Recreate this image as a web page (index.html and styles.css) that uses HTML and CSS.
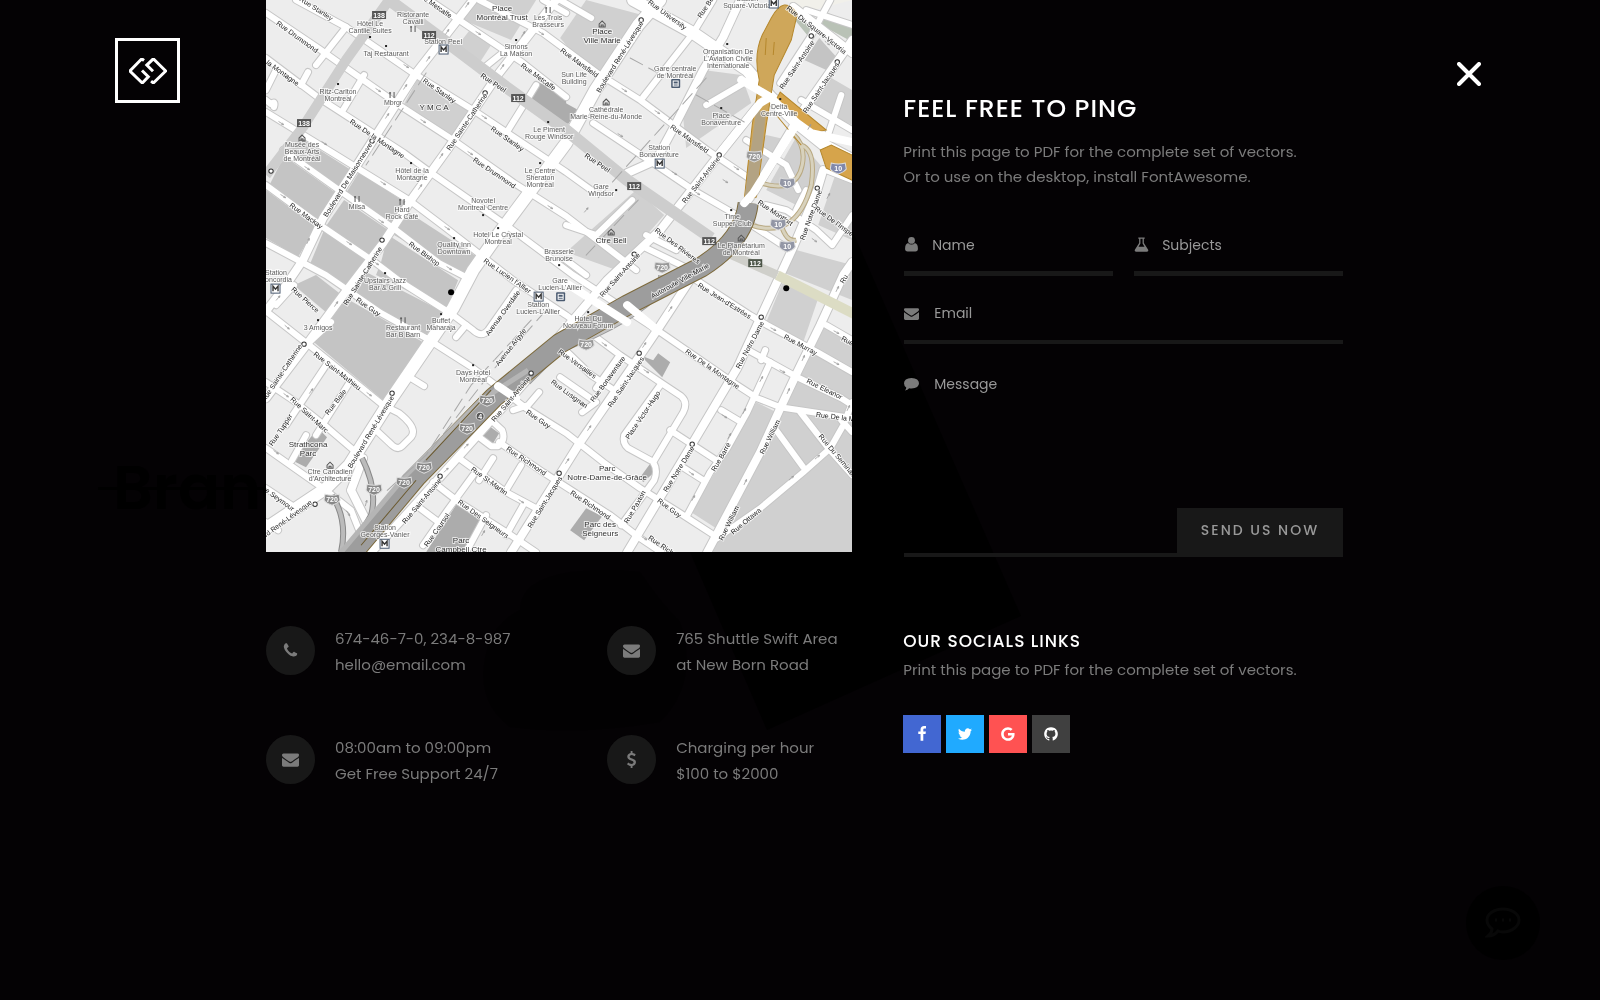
FILE: index.html
```html
<!DOCTYPE html>
<html lang="en">
<head>
    <meta charset="UTF-8">
    <meta name="viewport" content="width=device-width, initial-scale=1.0">
    <title>Contact</title>
    <link rel="stylesheet" href="styles.css">
</head>
<body>
    <!-- Page behind the overlay -->
    <div class="backdrop" aria-hidden="true">
        <span class="ghost-title">Brand</span>
        <svg class="ghost-art" viewBox="0 0 1600 1000">
            <path d="M852 230L1021 616 767 730 690 552H852z"/>
            <path d="M490 640q10-20 30-30 0-30 50-38 40-4 70 0 20 30 40 50 20 60-20 100-80 14-150 5-40-30-20-87z" opacity=".5"/>
        </svg>
    </div>

    <!-- Icons -->
    <svg class="sprite" aria-hidden="true">
        <symbol id="envelope" viewBox="0 0 1792 1792"><path d="M1792 710v794q0 66-47 113t-113 47h-1472q-66 0-113-47t-47-113v-794q44 49 101 87 362 246 497 345 57 42 92.5 65.5t94.5 48 110 24.5h2q51 0 110-24.5t94.5-48 92.5-65.5q170-123 498-345 57-39 100-87zm0-294q0 79-49 151t-122 123q-376 261-468 325-10 7-42.5 31t-54 38.5-52 32.5-57.5 27-50 9h-2q-23 0-50-9t-57.5-27-52-32.5-54-38.5-42.5-31q-91-64-262-182.5t-205-142.5q-62-42-117-115.5t-55-136.5q0-78 41.5-130t118.5-52h1472q65 0 112.5 47t47.5 113z"/></symbol>
        <symbol id="phone" viewBox="0 0 1792 1792"><path d="M1600 1240q0 27-10 70.5t-21 68.5q-21 50-122 106-94 51-186 51-27 0-53-3.5t-57.5-12.5-47-14.5-55.5-20.5-49-18q-98-35-175-83-127-79-264-216t-216-264q-48-77-83-175-3-9-18-49t-20.5-55.5-14.5-47-12.5-57.5-3.5-53q0-92 51-186 56-101 106-122 25-11 68.5-21t70.5-10q14 0 21 3 18 6 53 76 11 19 30 54t35 63.5 31 53.5q3 4 17.5 25t21.5 35.5 7 28.5q0 20-28.5 50t-62 55-62 53-28.5 46q0 9 5 22.5t8.5 20.5 14 24 11.5 19q76 137 174 235t235 174q2 1 19 11.5t24 14 20.5 8.5 22.5 5q18 0 46-28.5t53-62 55-62 50-28.5q14 0 28.5 7t35.5 21.5 25 17.5q25 15 53.5 31t63.5 35 54 30q70 35 76 53 3 7 3 21z"/></symbol>
        <symbol id="dollar" viewBox="0 0 1792 1792"><path d="M1362 1185q0 153-99.5 263.5t-258.5 136.5v175q0 14-9 23t-23 9h-135q-13 0-22.5-9.5t-9.5-22.5v-175q-66-9-127.5-31t-101.5-44.5-74-48-46.5-37.5-17.5-18q-17-21-2-41l103-135q7-10 23-12 15-2 24 9l2 2q113 99 243 125 37 8 74 8 81 0 142.5-43t61.5-122q0-28-15-53t-33.5-42-58.5-37.5-66-32-80-32.5q-39-16-61.5-25t-61.5-26.5-62.5-31-56.5-35.5-53.5-42.5-43.5-49-35.5-58-21-66.5-8.5-78q0-138 98-242t255-134v-180q0-13 9.5-22.5t22.5-9.5h135q14 0 23 9t9 23v176q57 6 110.5 23t87 33.5 63.5 37.5 39 29 15 14q17 18 5 38l-81 146q-8 15-23 16-14 3-27-7-3-3-14.5-12t-39-26.5-58.5-32-74.5-26-85.5-11.5q-95 0-155 43t-60 111q0 26 8.5 48t29.5 41.5 39.5 33 56 31 60.5 27 70 27.5q53 20 81 31.5t76 35 75.5 42.5 62 50 53 63.5 31.5 76.5 13 94z"/></symbol>
        <symbol id="user" viewBox="0 0 14 14"><circle cx="7" cy="3.2" r="3.2"/><path d="M3.8 5.6Q1 6.4 1 11q0 2.6 2.4 2.6h7.2Q13 13.600 13 11q0-4.600-2.800-5.400Q9 7 7 7T3.800 5.600z"/></symbol>
        <symbol id="flask" viewBox="0 0 14 14"><path fill-rule="evenodd" d="M4 .4h6v1.200H9.200v4l4 6.400q.8 1.600-1 1.700H1.800q-1.800-.1-1-1.700l4-6.400v-4H4zM6 1.600v4.400L4.200 9h5.600L8 6V1.600z"/></symbol>
        <symbol id="comment" viewBox="0 0 16 14"><path d="M8 0q8 .6 8 5.600T8 11.300q-1.500 0-2.500-.2Q4 13 1 13.400 2.500 12 2.400 10.200 0 8.500 0 5.600 0 .6 8 0z"/></symbol>
        <symbol id="facebook" viewBox="0 0 1792 1792"><path d="M1343 12v264h-157q-86 0-116 36t-30 108v189h293l-39 296h-254v759h-306v-759h-255v-296h255v-218q0-186 104-288.5t277-102.5q147 0 228 12z"/></symbol>
        <symbol id="twitter" viewBox="0 0 1792 1792"><path d="M1684 408q-67 98-162 167 1 14 1 42 0 130-38 259.5t-115.5 248.5-184.5 210.5-258 146-323 54.5q-271 0-496-145 35 4 78 4 225 0 401-138-105-2-188-64.5t-114-159.5q33 5 61 5 43 0 85-11-112-23-185.5-111.5t-73.5-205.5v-4q68 38 146 41-66-44-105-115t-39-154q0-88 44-163 121 149 294.5 238.5t371.5 99.5q-8-38-8-74 0-134 94.5-228.5t228.5-94.5q140 0 236 102 109-21 205-78-37 115-142 178 93-10 186-50z"/></symbol>
        <symbol id="google" viewBox="0 0 1792 1792"><path d="M896 786h725q12 67 12 128 0 217-91 387.5t-259.5 266.5-386.5 96q-157 0-299-60.5t-245-163.5-163.5-245-60.5-299 60.5-299 163.5-245 245-163.5 299-60.5q300 0 515 201l-209 201q-123-119-306-119-129 0-238.500 65t-173.500 176.500-64 243.500 64 243.500 173.500 176.500 238.500 65q87 0 160-24t120-60 82-82 51.500-87 22.500-78h-436v-264z"/></symbol>
        <symbol id="github" viewBox="0 0 1792 1792"><path d="M896 128q209 0 385.5 103t279.5 279.5 103 385.500q0 251-146.500 451.500t-378.500 277.500q-27 5-40-7t-13-30q0-3 .5-76.500t.5-134.500q0-97-52-142 57-6 102.500-18t94-39 81-66.500 53-105 20.500-150.500q0-119-79-206 37-91-8-204-28-9-81 11t-92 44l-38 24q-93-26-192-26t-192 26q-16-11-42.500-27t-83.500-38.500-85-13.500q-45 113-8 204-79 87-79 206 0 85 20.500 150t52.500 105 80.500 67 94 39 102.500 18q-39 36-49 103-21 10-45 15t-57 5-65.500-21.500-55.500-62.500q-19-32-48.500-52t-49.500-24l-20-3q-21 0-29 4.500t-5 11.500 9 14 13 12l7 5q22 10 43.500 38t31.500 51l10 23q13 38 44 61.500t67 30 69.500 7 55.500-3.500l23-4q0 38 .5 88.500t.5 54.500q0 18-13 30t-40 7q-232-77-378.500-277.500t-146.500-451.500q0-209 103-385.500t279.500-279.500 385.500-103z"/></symbol>
    </svg>

    <div class="page">
        <header class="brand">
            <a class="logo" href="#" aria-label="Home">
                <svg viewBox="0 0 38 26"><path d="M15 2.500L12.800.8.900 13l12.400 12 6-6.300-6.300-6.200M24 13.300l-6.200-6.200L24.300.8 36.700 13 24.300 25l-2.200-1.800"/></svg>
            </a>
        </header>

        <main class="content">
            <section class="left">
                <svg class="map" id="map" viewBox="0 0 586 552" role="img" aria-label="Map">
                    <rect width="586" height="552" fill="#ededed"/>
                    <!-- Blocks -->
                    <g class="blocks">
                        <path d="M210 0H270L245 40 197 20z"/>
                        <path d="M203 31L225 45 212 65 188 50z"/>
                        <path d="M152 78L205 110 186 136 138 104z"/>
                        <path d="M294 38L320 0 376 15 332 82z"/>
                        <path d="M30 135L85 170 73 190 20 155z" class="mid"/>
                        <path d="M93 172L140 203 125 223 80 193z" class="mid"/>
                        <path d="M18 156L70 193 53 220 3 186z" class="mid"/>
                        <path d="M78 200L122 230 100 262 60 226z" class="mid"/>
                        <path d="M0 190L50 227 32 257 0 238z" class="mid"/>
                        <path d="M58 230L105 263 85 293 44 264z" class="mid"/>
                        <path d="M128 235L142 212 213 258 200 277z" class="mid"/>
                        <path d="M115 262L122 235 192 280 180 310 110 275z" class="mid"/>
                        <path d="M28 285L50 275 76 295 60 312z" class="mid"/>
                        <path d="M100 272L178 312 160 335 85 292z" class="mid"/>
                        <path d="M80 298L157 342 117 400 48 342z" class="mid"/>
                        <path d="M272 82L300 96V127L262 100z" class="dark"/>
                        <path d="M294 100L312 110 302 124 294 120z" class="dark"/>
                        <path d="M437 70L475 75 485 103 420 148 417 118z"/>
                        <path d="M370 190L398 215 350 270 300 252z"/>
                        <path d="M500 135L522 140 484 195 488 145z"/>
                        <path d="M530 137L560 172 540 210 500 190z"/>
                        <path d="M553 38L571 58 560 70 538 60z" class="mid"/>
                        <path d="M560 75L586 90V125L545 105z"/>
                        <path d="M570 172L586 180V240L552 225z"/>
                        <path d="M530 250L586 265V300L516 272z"/>
                        <path d="M516 283L553 295 536 345 500 322z"/>
                        <path d="M557 322L586 340V418L516 406z"/>
                        <path d="M490 402L510 412 453 530 425 512z"/>
                        <path d="M514 410L586 420V552H441L453 530z"/>
                        <path d="M374 355L387 360 392 353 404 362 396 377z" class="dark"/>
                        <path d="M52 428L61 437 40 467 26 460z" class="dark"/>
                        <path d="M191 503L217 520 196 552H160z" class="dark"/>
                        <path d="M222 425L233 433 227 443 217 437z" class="dark"/>
                        <path d="M320 508L336 516 318 540 304 530z" class="dark"/>
                        <path d="M385 462L387 473 377 482 374 477z" class="dark"/>
                    </g>
                    <path d="M527 18L546 20 545 40zM560 12L586 25V42L555 25z" fill="#b9c2b6"/>
                    <path d="M520 0H586L540 12z" fill="#f1f0ea"/>

                    <!-- Streets: casing first, white fill on top -->
                    <defs>
                        <g id="thin">
                            <path d="M0 13L52 48 83 70 133 105 187 140 248 183 300 216 370 270"/>
                            <path d="M0 58L53 98 138 153 168 175 240 225 307 275 391 330 471 385 491 398 514 407 586 418"/>
                            <path d="M0 112L67 153 143 200 180 228 247 280 300 315 354 355 394 382 415 396Q422 402 417 412L387 462Q392 470 388 480L355 525"/>
                            <path d="M17 150L73 190 130 230 173 263 200 277"/>
                            <path d="M0 185L57 227 110 263 135 282 187 315 207 330Q216 338 222 330L250 290"/>
                            <path d="M0 243L60 275 115 313 160 338 207 368 260 408 300 433 337 462 374 488 414 513 451 537"/>
                            <path d="M0 311L52 352 117 405 133 413Q152 428 145 437L136 446Q132 450 126 445L110 430"/>
                            <path d="M0 382L27 400 62 428 97 458"/>
                            <path d="M0 448L20 462 57 488 85 510 95 535"/>
                            <path d="M0 488L30 508M0 522L12 530"/>
                            <path d="M30 0L80 27 147 73 207 110 300 172 325 190"/>
                            <path d="M163 0L193 20 257 63 300 97M327 123L387 163 427 190 467 213 524 250"/>
                            <path d="M213 0L277 33 331 73 374 100 441 150 481 177"/>
                            <path d="M277 0L300 13M0 100L5 104Q10 100 8 107"/>
                            <path d="M447 0L427 33 377 97M540 10L586 25M564 0L544 37 514 83"/>
                            <path d="M80 27L50 65M98 75L77 110M42 72L35 85M240 50L215 70M270 85L242 130"/>
                            <path d="M10 70L0 90M325 18L294 0M440 105L500 70"/>
                            <path d="M504 362L481 412 461 448 444 472 421 515"/>
                            <path d="M451 538L494 508 537 472 564 448 577 425 586 402"/>
                            <path d="M510 430L537 467M534 412L562 448 586 475M575 420L586 432"/>
                            <path d="M394 385L358 435Q356 443 362 448L384 460M404 430L427 445 450 460M415 466L437 480"/>
                            <path d="M233 442L277 472 344 515 374 538 395 552"/>
                            <path d="M193 458L240 492 270 508M167 482L193 502 242 533 270 552M150 505L170 520"/>
                            <path d="M207 475L180 512 157 545M227 458L213 480M255 465L240 490M220 515L200 552M257 505L240 535"/>
                            <path d="M223 418L236 430Q240 440 232 446H225L213 437M273 392L262 405 247 410M145 378L158 386M200 325L190 337"/>
                            <path d="M427 278L484 315 501 325 551 352 586 372M482 350L531 377 575 398 586 405M560 325L586 340M495 360L499 350"/>
                            <path d="M455 410L475 422M294 345L325 375 345 388M294 377L330 402 316 412M352 357L330 388"/>
                            <path d="M60 365L20 425M85 380L50 435M40 435L26 460M28 285L10 305M65 322L35 350"/>
                            <path d="M300 225L330 235 366 200M320 275L300 260M380 248L425 270M410 250L380 235M500 205L520 210 550 230 566 245 586 215"/>
                            <path d="M535 100L586 130M540 190L530 210M575 95L560 140M560 170L586 180M480 140L520 165 532 190"/>
                        </g>
                        <g id="wide">
                            <path d="M207 0L150 73 107 140 57 218 37 260 20 285 0 311"/>
                            <path d="M290 0L233 73 183 147 147 197 117 243 77 295 38 348 0 398"/>
                            <path d="M474 0L457 37 437 70 410 123 390 160 361 173"/>
                            <path d="M494 103L454 153 394 230 341 280 294 335 265 375 200 448 137 518 105 552"/>
                            <path d="M586 40L537 110 487 193 478 205M427 275L391 330 374 355 314 442 245 552"/>
                            <path d="M557 170L551 190 527 247 514 275 494 318 471 368 427 442 361 552"/>
                            <path d="M586 262L577 275 554 325 531 372 514 408 494 452 441 552"/>
                            <path d="M527 7L586 53M97 458L85 490M85 490L105 530"/>
                        </g>
                        <g id="avenue">
                            <path d="M394 0L372 25 329 90 300 143 233 233 207 270 187 308 123 402 83 465 60 488 0 528"/>
                            <path d="M367 0L427 33 481 70 504 97 531 123 561 147 586 160"/>
                        </g>
                    </defs>
                    <use href="#thin" class="street casing-thin"/>
                    <use href="#wide" class="street casing-wide"/>
                    <use href="#avenue" class="street casing-avenue"/>
                    <use href="#thin" class="street fill-thin"/>
                    <use href="#wide" class="street fill-wide"/>
                    <use href="#avenue" class="street fill-avenue"/>

                    <!-- Main routes -->
                    <g class="route">
                        <path d="M123 0L80 60 37 127 0 175" stroke="#cdcdcd" stroke-width="10"/>
                        <path d="M123 0L187 47 240 87 300 130 361 180 445 238" stroke="#cdcdcd" stroke-width="12"/>
                        <path d="M455 250L511 275" stroke="#cfcfca" stroke-width="9"/>
                        <path d="M511 275L590 315" stroke="#dcdcc4" stroke-width="10"/>
                        <path d="M492 182Q530 195 536 165 540 145 526 133M485 225Q530 240 545 185 550 150 535 145M515 225Q520 242 530 240" stroke="#b9a982" stroke-width="5"/>
                        <path d="M492 182Q530 195 536 165 540 145 526 133M485 225Q530 240 545 185 550 150 535 145M515 225Q520 242 530 240" stroke="#d8d2bd" stroke-width="3"/>
                        <path d="M96 458Q112 490 105 515 95 535 75 552M66 495Q82 520 75 552" stroke="#888" stroke-width="6"/>
                        <path d="M96 458Q112 490 105 515 95 535 75 552M66 495Q82 520 75 552" stroke="#bbb" stroke-width="4"/>
                        <path d="M395 275V290Q370 320 294 350L262 382" stroke="#999" stroke-width="6"/>
                        <path d="M395 275V290Q370 320 294 350L262 382" stroke="#c4c4c4" stroke-width="4"/>
                        <path d="M482 203Q478 240 435 267L361 305 294 343 228 397 150 477 83 557" stroke="#7d6a3c" stroke-width="21"/>
                        <path d="M482 203Q478 240 435 267L361 305 294 343 228 397 150 477 83 557" stroke="#9d9d9d" stroke-width="19"/>
                        <path d="M262 370L215 400 140 475 75 552" stroke="#b5b5b5" stroke-width="5"/>
                        <path d="M225 390L160 460M150 480L95 545" stroke="#6b5a30" stroke-width="1"/>
                    </g>
                    <path d="M505 18Q518-6 531 14L525 40 508 75 500 125 490 197 478 200 486 125 493 80Q487 55 496 35z" fill="#cfa75a" stroke="#b5872b"/>
                    <path d="M490 110L500 112 490 197 478 200z" fill="#b3a383"/>
                    <path d="M514 92L560 130 550 132 507 105zM554 150L565 145 590 157V182L560 168z" fill="#d6a44b" stroke="#b5872b"/>
                    <path d="M499 55L500 38M507 55L508 42M510 115L535 145" stroke="#b5872b" fill="none"/>
                    <g class="street fill-wide">
                        <path d="M475 80L504 97 531 123 545 133 586 142M504 97L494 103 454 153M531 123L487 193 478 203"/>
                        <path d="M361 305L391 330M300 283L361 322M232 386L250 398"/>
                    </g>
                    <path class="rail" d="M160 73L100 165M440 78L330 200M364 58L390 72M430 95L478 122M372 200L320 255M280 310L225 372 165 450M265 320L205 385 160 455 118 493"/>
                </svg>

                <ul class="contacts">
                    <li class="contact">
                        <span class="badge"><svg><use href="#phone"/></svg></span>
                        <p>674-46-7-0, 234-8-987<br>hello@email.com</p>
                    </li>
                    <li class="contact">
                        <span class="badge"><svg><use href="#envelope"/></svg></span>
                        <p>765 Shuttle Swift Area<br>at New Born Road</p>
                    </li>
                    <li class="contact">
                        <span class="badge"><svg><use href="#envelope"/></svg></span>
                        <p>08:00am to 09:00pm<br>Get Free Support 24/7</p>
                    </li>
                    <li class="contact">
                        <span class="badge"><svg><use href="#dollar"/></svg></span>
                        <p>Charging per hour<br>$100 to $2000</p>
                    </li>
                </ul>
            </section>

            <section class="right">
                <h1>Feel free to ping</h1>
                <p class="intro">Print this page to PDF for the complete set of vectors.<br>Or to use on the desktop, install FontAwesome.</p>

                <form class="form">
                    <div class="field half">
                        <label for="name" aria-label="Name"><svg><use href="#user"/></svg></label>
                        <input id="name" type="text" placeholder="Name">
                    </div>
                    <div class="field half">
                        <label for="subjects" aria-label="Subjects"><svg><use href="#flask"/></svg></label>
                        <input id="subjects" type="text" placeholder="Subjects">
                    </div>
                    <div class="field">
                        <label for="email" aria-label="Email"><svg><use href="#envelope"/></svg></label>
                        <input id="email" type="email" placeholder="Email">
                    </div>
                    <div class="field message">
                        <label for="message" aria-label="Message"><svg><use href="#comment"/></svg></label>
                        <textarea id="message" placeholder="Message"></textarea>
                        <button class="send" type="submit">Send us now</button>
                    </div>
                </form>

                <h2>Our socials links</h2>
                <p class="note">Print this page to PDF for the complete set of vectors.</p>
                <nav class="socials">
                    <a class="facebook" href="#" aria-label="Facebook"><svg><use href="#facebook"/></svg></a>
                    <a class="twitter" href="#" aria-label="Twitter"><svg><use href="#twitter"/></svg></a>
                    <a class="google" href="#" aria-label="Google"><svg><use href="#google"/></svg></a>
                    <a class="github" href="#" aria-label="GitHub"><svg><use href="#github"/></svg></a>
                </nav>
            </section>
        </main>

        <div class="close-wrap">
            <button class="close" type="button" aria-label="Close">
                <svg viewBox="0 0 24 24"><path d="M2 2l20 20M22 2L2 22"/></svg>
            </button>
        </div>
    </div>

    <button class="chat" type="button" aria-label="Chat">
        <svg viewBox="0 0 36 34"><path d="M18 3c9 0 16 5 16 11s-7 12-16 12q-3 0-5-1-4 5-10 5 4-3 4-7-5-4-5-9C2 8 9 3 18 3z"/><path d="M10 14h2M17 14h2M24 14h2"/></svg>
    </button>

    <script src="map.js"></script>
</body>
</html>
```
FILE: styles.css
```css
* {
    box-sizing: border-box;
}

body {
    margin: 0;
    min-height: 100vh;
    background-color: #040204;
    color: #7b7b7b;
    font-family: Poppins, Inter, sans-serif;
    font-size: 15px;
    line-height: 26px;
}

h1, h2, p, ul {
    margin: 0;
    padding: 0;
}

h1, h2 {
    color: #ffffff;
    font-weight: 500;
    text-transform: uppercase;
    letter-spacing: 1px;
}

svg {
    display: block;
    fill: currentColor;
}

button {
    border: none;
    cursor: pointer;
    font-family: inherit;
}

.sprite {
    position: absolute;
    width: 0;
    height: 0;
}

/* Background page */
.backdrop {
    position: fixed;
    inset: 0;
    z-index: -1;
    color: #000000;
}

.ghost-title {
    position: absolute;
    top: 451px;
    left: 98px;
    padding-left: 15px;
    font-size: 62px;
    font-weight: 600;
    line-height: 74px;
}

.ghost-title::before {
    content: "";
    position: absolute;
    top: 36px;
    left: 0;
    width: 100%;
    height: 3px;
    background-color: #000000;
}

.ghost-art {
    width: 100%;
}

.page {
    display: grid;
    grid-template-columns: 266px 1fr 257px;
    align-items: start;
}

.brand {
    padding: 38px 0 0 115px;
}

.logo {
    display: flex;
    align-items: center;
    justify-content: center;
    width: 65px;
    height: 65px;
    border: 3px solid #ffffff;
    color: #ffffff;
}

.logo svg {
    width: 38px;
    height: 26px;
    fill: none;
    stroke: currentColor;
    stroke-width: 3;
}

.close-wrap {
    display: flex;
    justify-content: flex-end;
    padding: 62px 119px 0 0;
}

.close {
    padding: 0;
    background: none;
    color: #ffffff;
}

.close svg {
    width: 24px;
    height: 24px;
    stroke: currentColor;
    stroke-width: 4;
    stroke-linecap: round;
}

.content {
    display: grid;
    grid-template-columns: minmax(0, 4fr) minmax(0, 3fr);
    gap: 51px;
}

/* Map */
.map {
    width: 100%;
    height: auto;
    font-family: "Liberation Sans", Arial, sans-serif;
    font-size: 7px;
}

.blocks {
    fill: #d0d0d0;
}

.blocks .mid {
    fill: #c4c4c4;
}

.blocks .dark {
    fill: #acacac;
}

.street, .route, .rail {
    fill: none;
    stroke: #ffffff;
    stroke-linecap: round;
    stroke-linejoin: round;
}

.casing-thin, .casing-wide, .casing-avenue {
    stroke: #c6c6c6;
}

.casing-thin { stroke-width: 8; }
.casing-wide { stroke-width: 10; }
.casing-avenue { stroke-width: 14; }
.fill-thin { stroke-width: 6; }
.fill-wide { stroke-width: 8; }
.fill-avenue { stroke-width: 12; }

.route {
    stroke-linecap: butt;
}

.rail {
    stroke: #a8a8a8;
    stroke-width: 1;
    stroke-dasharray: 14 7;
}

.road-name, .place, .park {
    text-anchor: middle;
    fill: #1c1c1c;
    stroke: #ffffff;
    stroke-width: 2;
    stroke-opacity: 0.7;
    paint-order: stroke;
}

.place {
    fill: #5c5c5c;
}

.park {
    font-size: 8px;
    fill: #333333;
}

.shield-text {
    text-anchor: middle;
    fill: #ffffff;
    font-weight: bold;
    font-size: 7px;
}

/* Contact details */
.contacts {
    display: grid;
    grid-template-columns: 341fr 245fr;
    row-gap: 57px;
    margin-top: 74px;
    list-style: none;
}

.contact {
    display: flex;
    gap: 20px;
    white-space: nowrap;
}

.badge {
    display: flex;
    align-items: center;
    justify-content: center;
    flex: none;
    width: 49px;
    height: 49px;
    border-radius: 50%;
    background-color: #181818;
}

.badge svg {
    width: 17px;
    height: 17px;
}

/* Form */
.right {
    padding-top: 93px;
}

h1 {
    font-size: 25px;
    line-height: 32px;
}

.intro {
    margin-top: 14px;
    line-height: 25px;
}

.form {
    display: grid;
    grid-template-columns: repeat(2, minmax(0, 1fr));
    column-gap: 21px;
    margin: 19px 0 0 1px;
}

.field {
    display: flex;
    align-items: center;
    grid-column: span 2;
    gap: 15px;
    height: 68px;
    padding-top: 10px;
    border-bottom: 4px solid #181818;
}

.half {
    grid-column: span 1;
    gap: 13px;
    border-bottom-width: 5px;
}

.field label svg {
    width: 15px;
    height: 15px;
}

.field input, .field textarea {
    flex: 1;
    min-width: 0;
    padding: 0;
    border: none;
    outline: none;
    resize: none;
    background: none;
    color: #999999;
    font: inherit;
    font-size: 14px;
}

.field ::placeholder {
    color: #999999;
    opacity: 1;
}

.message {
    align-items: flex-start;
    height: 213px;
    padding-top: 27px;
}

.message label {
    padding-top: 6px;
}

.message textarea {
    align-self: stretch;
}

.send {
    align-self: flex-end;
    width: 166px;
    height: 45px;
    background-color: #181818;
    color: #999999;
    font-size: 14px;
    font-weight: 500;
    text-transform: uppercase;
    letter-spacing: 2px;
}

h2 {
    margin-top: 71px;
    font-size: 17px;
    line-height: 26px;
}

.note {
    margin-top: 3px;
}

.socials {
    display: flex;
    gap: 5px;
    margin-top: 32px;
}

.socials a {
    display: flex;
    align-items: center;
    justify-content: center;
    width: 38px;
    height: 38px;
    color: #ffffff;
}

.socials svg {
    width: 16px;
    height: 16px;
}

.facebook { background-color: #4267d2; }
.twitter { background-color: #20aaff; }
.google { background-color: #ff5252; }
.github { background-color: #404040; }

.chat {
    position: fixed;
    right: 60px;
    bottom: 40px;
    display: flex;
    align-items: center;
    justify-content: center;
    width: 74px;
    height: 74px;
    border-radius: 50%;
    background-color: #000000;
    color: #080808;
}

.chat svg {
    width: 36px;
    height: 34px;
    fill: none;
    stroke: currentColor;
    stroke-width: 3;
}
```
FILE: map.js
```js
// Labels of the map: text, x, y, angle
const roads = [
    ["Rue Stanley", 50, 9, 33], ["Rue Drummond", 31, 37, 36], ["De la Montagne", 12, 70, 36],
    ["Rue Metcalfe", 168, 5, 35], ["Rue Metcalfe", 272, 77, 36], ["Rue Stanley", 173, 91, 35],
    ["Rue Stanley", 241, 139, 35], ["Rue Peel", 227, 83, 34], ["Rue Peel", 331, 163, 34],
    ["Rue De la Montagne", 111, 139, 34], ["Rue Drummond", 228, 173, 34], ["Rue Mackay", 40, 216, 36],
    ["Rue Bishop", 158, 254, 36], ["Rue Sainte-Catherine", 201, 122, -56], ["Boulevard De Maisonneuve", 82, 180, -58],
    ["Rue Sainte-Catherine", 97, 276, -58], ["Rue Mansfield", 313, 63, 36], ["Rue Mansfield", 423, 139, 35],
    ["Boulevard René-Lévesque", 354, 57, -58], ["Rue University", 401, 15, 36], ["Rue Bel", 440, 7, -56],
    ["Rue Du Square-Victoria", 550, 30, 38], ["Rue Saint-Antoine", 531, 65, -56], ["Rue Saint-Jacques", 555, 88, -56],
    ["Rue Saint-Antoine", 435, 180, -52], ["Rue Notre Dame", 545, 215, -70], ["Rue Montfort", 509, 213, 34],
    ["Rue De l'Inspecteur", 574, 226, 36], ["Rue Des Rivieres", 411, 246, 37], ["Rue Saint-Antoine", 354, 275, -48],
    ["Autoroute Ville-Marie", 414, 281, -29], ["Rue Lucien l'Allier", 241, 276, 35], ["Rue Pierce", 39, 300, 42],
    ["Rue Guy", 102, 307, 34], ["Avenue Overdale", 237, 313, -54], ["Avenue Argyle", 245, 347, -52],
    ["Rue Sainte-Catherine", 16, 373, -56], ["Rue Saint-Mathieu", 71, 371, 38], ["Rue Saint-Marc", 43, 415, 43],
    ["Rue Baile", 70, 402, -52], ["Rue Tupper", 15, 430, -56], ["Boulevard René-Lévesque", 105, 432, -59],
    ["Boulevard René-Lévesque", 12, 526, -36], ["Rue Seymour", 10, 497, 36], ["Rue Saint-Antoine", 245, 399, -50],
    ["Rue Saint-Antoine", 156, 501, -50], ["Rue Richmond", 260, 461, 34], ["Rue St-Martin", 223, 481, 36],
    ["Rue Des Seigneurs", 217, 519, 36], ["Rue Coursol", 171, 530, -55], ["Rue Guy", 272, 419, 34],
    ["Rue Saint-Jacques", 279, 502, -58], ["Rue Versailles", 311, 364, 36], ["Rue Lusignan", 303, 394, 36],
    ["Rue Bonaventure", 342, 379, -54], ["Rue Saint-Jacques", 360, 382, -56], ["Rue De la Montagne", 446, 369, 35],
    ["Rue Jean-d'Estrées", 458, 301, 32], ["Rue Notre Dame", 484, 345, -62], ["Rue Murray", 534, 345, 28],
    ["Rue Eleanor", 558, 389, 26], ["Rue De la M", 569, 417, 7], ["Place Victor-Hugo", 377, 415, -56],
    ["Rue Notre Dame", 413, 469, -58], ["Rue Barré", 455, 457, -60], ["Rue William", 504, 437, -64],
    ["Rue William", 463, 523, -64], ["Rue Ottawa", 480, 521, -40], ["Rue Du Seminaire", 572, 457, 50],
    ["Rue Paxton", 369, 507, -60], ["Rue Guy", 403, 508, 36], ["Rue Richmond", 324, 505, 34],
    ["Rue Richmond", 402, 550, 34], ["Rue", 581, 341, 28], ["Ru", 578, 279, -60]
];

// Places: lines, x, y of the first line
const places = [
    ["Hôtel Le|Cantlie Suites", 104, 26], ["Ristorante|Cavalli", 147, 17], ["Station Peel", 177, 44],
    ["Taj Restaurant", 120, 56], ["Les Trois|Brasseurs", 282, 20], ["Simons|La Maison", 250, 49],
    ["Ritz-Carlton|Montreal", 72, 94], ["Mbrgr", 127, 105], ["Musée des|Beaux-Arts|de Montréal", 36, 147],
    ["Hôtel de la|Montagne", 146, 173], ["Milsa", 91, 209], ["Hard|Rock Café", 136, 212],
    ["Le Piment|Rouge Windsor", 283, 132], ["Le Centre|Sheraton|Montreal", 274, 173], ["Novotel|Montreal Centre", 217, 203],
    ["Hotel Le Crystal|Montreal", 232, 237], ["Quality Inn|Downtown", 188, 247], ["Brasserie|Brunoise", 293, 254],
    ["Sun Life|Building", 308, 77], ["Gare centrale|de Montréal", 409, 71], ["Cathédrale|Marie-Reine-du-Monde", 340, 112],
    ["Organisation De|L'Aviation Civile|Internationale", 462, 54], ["Place|Bonaventure", 455, 118], ["Station|Bonaventure", 393, 150],
    ["Delta|Centre-Ville", 513, 109], ["Station|Square-Victoria", 481, 1], ["Gare|Windsor", 335, 189],
    ["Time|Supper Club", 466, 219], ["Le Planétarium|de Montréal", 475, 248], ["Station|Concordia", 10, 275],
    ["Upstairs Jazz|Bar & Grill", 119, 283], ["3 Amigos", 52, 330], ["Restaurant|Bar B Barn", 137, 330],
    ["Buffet|Maharaja", 175, 323], ["Gare|Lucien-L'Allier", 294, 283], ["Station|Lucien-L'Allier", 272, 307],
    ["Days Hotel|Montreal", 207, 375], ["Hotel Du|Nouveau Forum", 322, 321], ["Ctre Canadien|d'Architecture", 64, 474],
    ["Station|Georges-Vanier", 119, 530]
];

const parks = [
    ["Place|Montréal Trust", 236, 11], ["Y M C A", 168, 110], ["Place|Ville Marie", 336, 34], ["Ctre Bell", 345, 243],
    ["Strathcona|Parc", 42, 447], ["Parc|Notre-Dame-de-Grâce", 341, 471], ["Parc des|Seigneurs", 334, 527],
    ["Parc|Campbell Ctre", 195, 543]
];

const shields = [
    ["138", 113, 15, "#555"], ["138", 38, 123, "#555"], ["112", 163, 35, "#555"], ["112", 252, 98, "#555"],
    ["112", 368, 186, "#555"], ["112", 443, 241, "#555"], ["112", 489, 263, "#4c5548"],
    ["720", 488, 156, "#999"], ["720", 396, 267, "#999"], ["720", 221, 400, "#888"], ["720", 201, 428, "#888"],
    ["720", 158, 467, "#888"], ["720", 138, 482, "#888"], ["720", 108, 489, "#888"], ["720", 66, 499, "#888"],
    ["720", 320, 344, "#999"], ["10", 572, 168, "#8088ab"], ["10", 521, 183, "#9296a5"],
    ["10", 512, 224, "#9296a5"], ["10", 521, 246, "#9296a5"]
];

const metros = [[177, 49], [507, 3], [393, 163], [9, 288], [272, 296], [118, 543]];
const trains = [[409, 83], [294, 296]];
const dots = [
    [104, 37], [120, 46], [72, 84], [145, 163], [250, 40], [282, 122], [274, 163], [217, 215], [232, 228],
    [188, 238], [293, 265], [461, 44], [455, 108], [514, 99], [350, 190], [465, 210], [52, 320], [175, 314],
    [207, 365], [322, 312], [119, 273]
];
const rings = [
    [219, 93], [106, 141], [116, 240], [5, 171], [375, 20], [545, 36], [571, 62], [453, 155], [368, 254],
    [551, 188], [38, 344], [126, 393], [265, 373], [174, 476], [49, 504], [293, 473], [373, 353], [495, 317], [426, 444]
];
const forks = [[147, 29], [126, 95], [91, 199], [136, 202], [282, 10], [137, 320]];
const halls = [[36, 138], [336, 24], [340, 102], [345, 232], [475, 238], [64, 465]];
const arrows = [
    [15, 123, 33], [58, 143, 33], [112, 90, 33], [140, 66, 33], [212, 33, 33], [275, 33, 33], [157, 121, 33],
    [218, 117, 33], [204, 153, 33], [41, 168, 33], [117, 183, 33], [17, 196, 33], [115, 221, 33], [181, 228, 33],
    [83, 243, 33], [110, 263, 33], [183, 268, 33], [284, 207, 33], [201, 5, -56], [181, 32, -56], [162, 59, -56],
    [139, 87, -56], [121, 116, -56], [236, 67, -56], [257, 34, -56], [175, 156, -56], [154, 187, -56],
    [42, 241, -65], [358, 90, 33], [391, 112, 33], [354, 135, 33], [408, 173, 33], [431, 193, 33], [470, 168, 33],
    [459, 181, 33], [320, 210, -50], [447, 56, -56], [12, 298, -50], [21, 327, 40], [70, 304, -56], [45, 391, -55],
    [20, 395, 36], [103, 394, 36], [10, 452, 36], [100, 503, -75], [82, 513, 55], [180, 470, -45], [200, 446, -45],
    [255, 501, 33], [217, 533, -60], [338, 344, 36], [380, 371, 33], [404, 309, -56], [378, 345, -56],
    [323, 428, -56], [301, 461, -56], [507, 329, 28], [570, 363, 28], [516, 371, 28], [537, 358, -66],
    [522, 391, -66], [495, 379, -62], [478, 411, -62], [463, 436, -62], [458, 416, 33], [425, 473, 36],
    [479, 482, -64], [525, 478, -40], [551, 457, -40], [582, 408, -64], [378, 538, 33], [427, 498, -60],
    [570, 332, 28], [571, 289, -64], [562, 196, -62], [543, 127, -60], [561, 43, 36], [548, 240, 36]
];

const map = document.getElementById("map");

function add(name, attrs, text) {
    const el = document.createElementNS("http://www.w3.org/2000/svg", name);
    Object.keys(attrs).forEach((key) => el.setAttribute(key, attrs[key]));
    if (text) el.textContent = text;
    map.appendChild(el);
}

function addLines(list, cls, step) {
    list.forEach(([text, x, y]) => {
        text.split("|").forEach((line, i) => add("text", { class: cls, x, y: y + i * step }, line));
    });
}

arrows.forEach(([x, y, a]) => add("path", {
    d: "M-3 0H3M1-1L3 0 1 1", fill: "none", stroke: "#999", "stroke-width": 0.7, transform: `translate(${x} ${y}) rotate(${a})`
}));
dots.forEach(([x, y]) => add("rect", { x: x - 1, y: y - 1, width: 2, height: 2, fill: "#222" }));
rings.forEach(([cx, cy]) => add("circle", { cx, cy, r: 2.2, fill: "#fff", stroke: "#333" }));
forks.forEach(([x, y]) => add("path", { d: `M${x - 2} ${y - 3}V${y + 3}M${x + 2} ${y - 3}V${y + 3}M${x - 3} ${y - 2}H${x - 1}`, stroke: "#555", fill: "none" }));
halls.forEach(([x, y]) => add("path", { d: `M${x - 3} ${y + 3}V${y}L${x} ${y - 3}L${x + 3} ${y}V${y + 3}ZM${x - 1} ${y + 3}V${y + 1}H${x + 1}V${y + 3}`, fill: "none", stroke: "#555" }));

roads.forEach(([text, x, y, a]) => {
    add("text", { class: "road-name", transform: `translate(${x} ${y}) rotate(${a})`, dy: 2 }, text);
});
addLines(places, "place", 7);
addLines(parks, "park", 9);

shields.forEach(([text, x, y, color]) => {
    const box = color === "#555" || color === "#4c5548";
    add("path", {
        d: box ? "M-7-4H7V4H-7Z" : "M-7-5Q0-3 7-5L8 1Q6 4 0 6Q-6 4-8 1Z",
        fill: color, stroke: box ? "none" : "#ddd", transform: `translate(${x} ${y})`
    });
    add("text", { class: "shield-text", x, y: y + 2.5 }, text);
});
metros.forEach(([x, y]) => {
    add("rect", { x: x - 4, y: y - 4, width: 9, height: 9, fill: "#fff", stroke: "#4a5a70" });
    add("path", { d: `M${x - 2} ${y + 3}V${y - 2}L${x + 0.5} ${y + 1}L${x + 3} ${y - 2}V${y + 3}`, fill: "none", stroke: "#333", "stroke-width": 1.4 });
});
trains.forEach(([x, y]) => {
    add("rect", { x: x - 4, y: y - 4, width: 9, height: 9, rx: 1, fill: "#4a5a70" });
    add("path", { d: `M${x - 2} ${y - 2}H${x + 3}V${y + 3}H${x - 2}ZM${x - 2} ${y + 1}H${x + 3}`, fill: "none", stroke: "#fff" });
});
[[185, 292], [520, 288]].forEach(([cx, cy]) => add("circle", { cx, cy, r: 3, fill: "#000" }));
add("circle", { cx: 214, cy: 416, r: 4, fill: "#555", stroke: "#ddd" });
add("text", { class: "shield-text", x: 214, y: 418.5 }, "4");
```
